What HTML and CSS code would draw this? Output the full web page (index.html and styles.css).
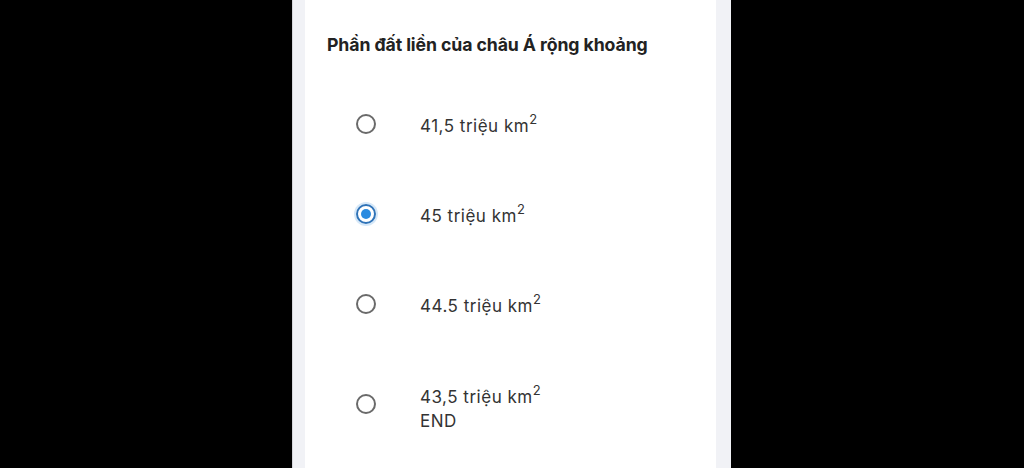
FILE: index.html
```html
<!DOCTYPE html>
<html lang="vi">
<head>
  <meta charset="UTF-8" />
  <meta name="viewport" content="width=device-width, initial-scale=1.0" />
  <title>Câu hỏi</title>
  <link rel="stylesheet" href="styles.css">
</head>
<body>
  <div class="frame">
    <div class="card">
      <h2 class="question">Phần đất liền của châu Á rộng khoảng</h2>
      <ul class="options">
        <li class="option">
          <span class="radio"></span>
          <span class="label">41,5 triệu km<sup>2</sup></span>
        </li>
        <li class="option">
          <span class="radio checked"></span>
          <span class="label">45 triệu km<sup>2</sup></span>
        </li>
        <li class="option">
          <span class="radio"></span>
          <span class="label">44.5 triệu km<sup>2</sup></span>
        </li>
        <li class="option last">
          <span class="radio"></span>
          <span class="label">43,5 triệu km<sup>2</sup><br>END</span>
        </li>
      </ul>
    </div>
  </div>
</body>
</html>
```

FILE: styles.css
```css
/* BASE */
* {
  margin: 0;
  padding: 0;
  box-sizing: border-box;
}
body {
  background: #000;
  font-family: Inter, "Noto Sans", Arial, sans-serif;
  height: 468px;
  overflow: hidden;
}
/* PANEL */
.frame {
  width: 439px;
  height: 468px;
  margin-left: 292px;
  background: #f1f2f6;
  border-left: 1px solid #d6d7dc;
  padding: 0 15px 0 12px;
}
.card {
  background: #fff;
  height: 100%;
  padding: 33px 22px 0;
}
.question {
  font-size: 17.7px;
  font-weight: 700;
  line-height: 24px;
  color: #222;
  letter-spacing: -0.1px;
}
/* OPTIONS */
.options {
  list-style: none;
  margin-top: 22px;
}
.option {
  display: flex;
  align-items: center;
  padding: 31px 0 31px 29px;
}
.option.last {
  padding-top: 32px;
}
.option.last .radio {
  margin-top: -6px;
}
.radio {
  width: 20px;
  height: 20px;
  border-radius: 50%;
  border: 2px solid #6a6a6a;
  flex-shrink: 0;
  margin-right: 44px;
  position: relative;
}
.radio.checked {
  border-color: #2f73b8;
  box-shadow: 0 0 0 2px #d6e8f8;
}
.radio.checked::after {
  content: "";
  position: absolute;
  left: 3px;
  top: 3px;
  width: 10px;
  height: 10px;
  border-radius: 50%;
  background: #2a8be0;
}
.label {
  font-size: 17px;
  line-height: 24px;
  letter-spacing: 0.5px;
  color: #333;
  padding-top: 4px;
}
.label sup {
  font-size: 13px;
  line-height: 0;
  vertical-align: 8px;
}
```
